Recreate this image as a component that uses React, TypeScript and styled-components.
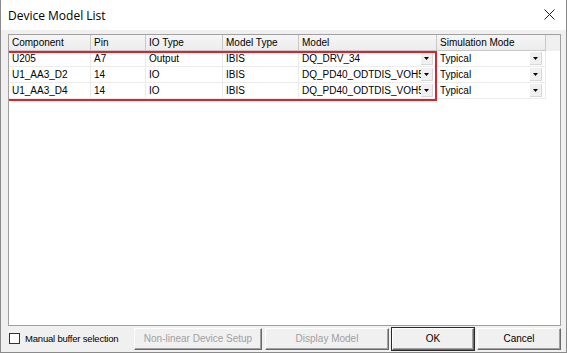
import styled, { createGlobalStyle } from "styled-components";

const GlobalStyle = createGlobalStyle`
  html, body {
    margin: 0;
    padding: 0;
    background: #ffffff;
  }
`;

type Row = {
  component: string;
  pin: string;
  ioType: string;
  modelType: string;
  model: string;
  mode: string;
};

const rows: Row[] = [
  { component: "U205", pin: "A7", ioType: "Output", modelType: "IBIS", model: "DQ_DRV_34", mode: "Typical" },
  { component: "U1_AA3_D2", pin: "14", ioType: "IO", modelType: "IBIS", model: "DQ_PD40_ODTDIS_VOH5", mode: "Typical" },
  { component: "U1_AA3_D4", pin: "14", ioType: "IO", modelType: "IBIS", model: "DQ_PD40_ODTDIS_VOH5", mode: "Typical" },
];

const columns = [
  { title: "Component", width: 82 },
  { title: "Pin", width: 55 },
  { title: "IO Type", width: 77 },
  { title: "Model Type", width: 76 },
  { title: "Model", width: 138 },
  { title: "Simulation Mode", width: 109 },
];

function DropArrow() {
  return (
    <svg width="5" height="3" viewBox="0 0 5 3">
      <path d="M0 0 H5 L2.5 3 Z" fill="#000" />
    </svg>
  );
}

function Combo({ value, width }: { value: string; width: number }) {
  return (
    <ComboCell $width={width}>
      <ComboText>{value}</ComboText>
      <ComboButton>
        <DropArrow />
      </ComboButton>
    </ComboCell>
  );
}

export default function App() {
  return (
    <>
      <GlobalStyle />
      <Window>
        <TitleBar>
          <Title>Device Model List</Title>
          <CloseIcon width="11" height="11" viewBox="0 0 11 11">
            <path d="M0.5 0.5 L10.5 10.5 M10.5 0.5 L0.5 10.5" stroke="#222" strokeWidth="1" />
          </CloseIcon>
        </TitleBar>
        <Body>
          <Grid>
            <HeaderRow>
              {columns.map((c) => (
                <HeaderCell key={c.title} $width={c.width}>
                  {c.title}
                </HeaderCell>
              ))}
            </HeaderRow>
            <Rows>
              {rows.map((r, i) => (
                <DataRow key={i}>
                  <Cell $width={columns[0].width}>{r.component}</Cell>
                  <Cell $width={columns[1].width}>{r.pin}</Cell>
                  <Cell $width={columns[2].width}>{r.ioType}</Cell>
                  <Cell $width={columns[3].width}>{r.modelType}</Cell>
                  <Combo value={r.model} width={columns[4].width} />
                  <Combo value={r.mode} width={columns[5].width} />
                </DataRow>
              ))}
              <Highlight />
            </Rows>
          </Grid>
          <Footer>
            <CheckLabel>
              <CheckBox />
              Manual buffer selection
            </CheckLabel>
            <Buttons>
              <Button $width={128} disabled>
                Non-linear Device Setup
              </Button>
              <Button $width={124} disabled>
                Display Model
              </Button>
              <Button $width={82} $default>
                OK
              </Button>
              <Button $width={84}>Cancel</Button>
            </Buttons>
          </Footer>
        </Body>
      </Window>
    </>
  );
}

const Window = styled.div`
  width: 567px;
  height: 353px;
  box-sizing: border-box;
  border: 1px solid #8a8a8a;
  border-top: none;
  background: #f0f0f0;
  display: flex;
  flex-direction: column;
  font-family: "Liberation Sans", Arial, sans-serif;
  font-size: 10px;
  color: #000;
`;

const TitleBar = styled.div`
  height: 30px;
  flex: none;
  background: #ffffff;
  display: flex;
  align-items: center;
  justify-content: space-between;
  padding: 0 11px 0 7px;
`;

const Title = styled.div`
  font-family: "Open Sans", "Liberation Sans", sans-serif;
  font-size: 12px;
  color: #000;
  padding-top: 1px;
`;

const CloseIcon = styled.svg`
  display: block;
  margin-top: -2px;
`;

const Body = styled.div`
  flex: 1;
  display: flex;
  flex-direction: column;
  padding: 4px 5px 0 7px;
  min-height: 0;
`;

const Grid = styled.div`
  flex: 1;
  background: #ffffff;
  border: 1px solid #a0a0a0;
  display: flex;
  flex-direction: column;
  overflow: hidden;
`;

const HeaderRow = styled.div`
  display: flex;
  height: 16px;
  background: #f0f0f0;
  flex: none;
`;

const HeaderCell = styled.div<{ $width: number }>`
  width: ${(p) => p.$width}px;
  box-sizing: border-box;
  display: flex;
  align-items: center;
  padding: 0 0 0 3px;
  border-right: 1px solid #c8c8c8;
  border-bottom: 1px solid #c8c8c8;
  background: linear-gradient(#f6f6f6, #ececec);
  white-space: nowrap;
  overflow: hidden;
`;

const Rows = styled.div`
  position: relative;
`;

const DataRow = styled.div`
  display: flex;
  height: 16px;
`;

const Cell = styled.div<{ $width: number }>`
  width: ${(p) => p.$width}px;
  box-sizing: border-box;
  display: flex;
  align-items: center;
  padding: 0 0 0 3px;
  border-right: 1px solid #ececec;
  border-bottom: 1px solid #ececec;
  white-space: nowrap;
  overflow: hidden;
`;

const ComboCell = styled.div<{ $width: number }>`
  width: ${(p) => p.$width}px;
  box-sizing: border-box;
  display: flex;
  align-items: center;
  padding: 0 3px 0 3px;
  border-right: 1px solid #ececec;
  border-bottom: 1px solid #ececec;
`;

const ComboText = styled.span`
  flex: 1;
  overflow: hidden;
  white-space: nowrap;
  line-height: 14px;
`;

const ComboButton = styled.div`
  width: 12px;
  height: 13px;
  flex: none;
  box-sizing: border-box;
  background: #f0f0f0;
  border-right: 1px solid #d8d8d8;
  border-bottom: 1px solid #d8d8d8;
  display: flex;
  align-items: center;
  justify-content: center;
`;

const Highlight = styled.div`
  position: absolute;
  left: -2px;
  top: 0;
  width: 430px;
  height: 50px;
  border: 2px solid #e0202c;
  box-sizing: border-box;
  pointer-events: none;
`;

const Footer = styled.div`
  height: 25px;
  flex: none;
  display: flex;
  align-items: center;
  justify-content: space-between;
  padding-bottom: 1px;
`;

const CheckLabel = styled.label`
  display: flex;
  align-items: center;
  gap: 5px;
  padding-left: 1px;
  white-space: nowrap;
  font-size: 9.5px;
  letter-spacing: -0.2px;
`;

const CheckBox = styled.span`
  width: 11px;
  height: 11px;
  box-sizing: border-box;
  border: 1px solid #333333;
  background: #ffffff;
  display: inline-block;
`;

const Buttons = styled.div`
  display: flex;
  gap: 3px;
`;

const Button = styled.button<{ $width: number; $default?: boolean }>`
  width: ${(p) => p.$width}px;
  height: 22px;
  box-sizing: border-box;
  font-family: "Liberation Sans", Arial, sans-serif;
  font-size: 10px;
  padding: 0;
  color: #000;
  background: #f0f0f0;
  border: 1px solid;
  border-color: #ffffff #696969 #696969 #ffffff;
  box-shadow: inset -1px -1px 0 #a0a0a0;
  outline: ${(p) => (p.$default ? "1px solid #2a2a2a" : "none")};
  outline-offset: 0;

  &:disabled {
    color: #a0a0a0;
  }
`;
